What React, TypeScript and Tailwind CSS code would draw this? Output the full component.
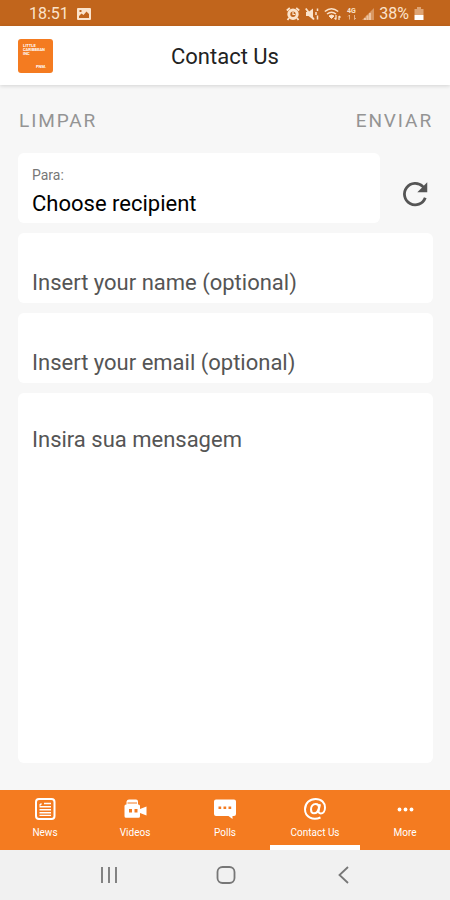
import React from "react";

const tabs = [
  { label: "News", icon: <NewsIcon /> },
  { label: "Videos", icon: <VideoIcon /> },
  { label: "Polls", icon: <PollsIcon /> },
  { label: "Contact Us", icon: <AtIcon />, active: true },
  { label: "More", icon: <MoreIcon /> },
];

function NewsIcon() {
  return (
    <svg viewBox="0 0 24 24" className="size-6" fill="none" stroke="currentColor" aria-hidden="true">
      <rect x="3" y="2" width="18.500" height="20" rx="3" strokeWidth="2" />
      <path d="M11 6.500h7M6.500 9.700h11.500M6.500 12.700h11.500M6.500 15.700h11.500M6.500 18.400h11.500" strokeWidth="1.400" />
      <path d="M6.500 8.500 8.500 6.500" strokeWidth="1.400" />
    </svg>
  );
}

function VideoIcon() {
  return (
    <svg viewBox="0 0 24 24" className="size-6" fill="currentColor" aria-hidden="true">
      <path
        fillRule="evenodd"
        d="M3.500 4.500Q4 2.500 6 2.500h7q2 0 2 2V7.500h.5q1.500 0 1.500 1.500v3l6.500-2.500v9L17 16v3.200q0 1.500-1.500 1.500H3Q1.500 20.700 1.500 19.200V9Q1.500 7.500 3 7.500h.5zM6 12v3.500h3V12zM11.500 12v3.500h3V12z"
      />
      <path d="M4.500 6h9.500" stroke="#f47b20" strokeWidth="1" />
    </svg>
  );
}

function PollsIcon() {
  return (
    <svg viewBox="0 0 24 24" className="size-6" fill="currentColor" aria-hidden="true">
      <path
        fillRule="evenodd"
        d="M3 2.500h18q2 0 2 2v12.500q0 2-2 2h-1.500V22l-4-3H3q-2 0-2-2v-12.500q0-2 2-2zM5.500 9.500v2.500h2.700V9.500zm5 0v2.500h2.700V9.500zm5 0v2.500h2.700V9.500z"
      />
    </svg>
  );
}

function AtIcon() {
  return (
    <svg viewBox="0 0 24 24" className="size-6" fill="none" stroke="currentColor" strokeWidth="2" aria-hidden="true">
      <path d="M17.500 20.500C10 24 2 20 2 12.300 2 6 6.800 2 12.600 2 18.600 2 22 6 22 10.500c0 3.500-1.800 6-4.200 6-2 0-2.500-1.400-2.100-3.300L17 7.300" />
      <path d="M16 10.500c0-2.200-1.300-3.500-3.300-3.500C9.800 7 8 9.700 8 12.600c0 2.200 1.200 3.700 3 3.700 2.700 0 4.400-2.300 5-5.800z" />
    </svg>
  );
}

function MoreIcon() {
  return (
    <svg viewBox="0 0 24 24" className="size-6" fill="currentColor" aria-hidden="true">
      <circle cx="6.500" cy="12.500" r="1.900" />
      <circle cx="12.500" cy="12.500" r="1.900" />
      <circle cx="18.500" cy="12.500" r="1.900" />
    </svg>
  );
}

function StatusBar() {
  return (
    <div className="flex h-[26px] items-center justify-between bg-[#c1651c] pt-0.5 pr-[26px] pl-[29px] text-[#fbe3cb]">
      <div className="flex items-center gap-2">
        <span className="text-base">18:51</span>
        <svg viewBox="0 0 14 12" className="h-3 w-3.5" fill="currentColor" aria-hidden="true">
          <path fillRule="evenodd" d="M1 0h12q1 0 1 1v10q0 1-1 1H1q-1 0-1-1V1q0-1 1-1zM2 8v2h10V6L9.500 3.500 6.500 7 4.500 5.500zM2.500 2v2h2V2z" />
        </svg>
      </div>
      <div className="flex items-center gap-[5px]">
        <svg viewBox="0 0 14 14" className="size-3.5" aria-hidden="true">
          <path d="M.8 3.500 3.800 1M13.200 3.500 10.200 1M3 11l-1.500 2M11 11l1.500 2" stroke="currentColor" strokeWidth="1.800" />
          <circle cx="7" cy="7.300" r="4.200" fill="none" stroke="currentColor" strokeWidth="3" />
          <path d="M7 4.800v2.700h2.200" fill="none" stroke="currentColor" strokeWidth="1.200" />
        </svg>
        <svg viewBox="0 0 14 14" className="size-3.5" aria-hidden="true">
          <path d="M1 5h2.500L8 1.500v11L3.500 9H1z" fill="currentColor" />
          <path d="M.8 1.500 9 12.500" stroke="currentColor" strokeWidth="1.800" />
          <path d="M12.500 1.500v2.500M11 5v3M12.500 8.500v4" stroke="currentColor" strokeWidth="1.500" />
        </svg>
        <svg viewBox="0 0 17 14" className="h-3.5 w-[17px]" fill="none" stroke="currentColor" aria-hidden="true">
          <path d="M.8 4.500q6.700-5.500 13.400 0M3 7q4.500-3.500 9 0" strokeWidth="1.500" />
          <path d="M5 9q2.500-2 5 0L7.500 11.500z" fill="currentColor" />
          <path d="M12 8v4.500M10.500 11l1.500 1.500M15 13V9M15 9l1.500 1.500" strokeWidth="1.300" />
        </svg>
        <svg viewBox="0 0 11 14" className="h-3.5 w-[11px]" fill="none" stroke="currentColor" aria-hidden="true">
          <text x="1" y="6" fontSize="7" fontWeight="700" fill="currentColor" stroke="none">4G</text>
          <path d="M3.500 12.500V8M2 9.500 3.500 8M8.500 8v4.500M8.500 12.500 10 11" opacity=".6" />
        </svg>
        <svg viewBox="0 0 12 12" className="size-3" fill="currentColor" aria-hidden="true">
          <path d="M12 0v12H0z" opacity=".4" />
          <path d="M2 10h2v2H2zM4.500 7.500h2V12h-2zM7 5h2v7H7z" opacity=".6" />
        </svg>
        <span className="text-base">38%</span>
        <svg viewBox="0 0 10 14" className="h-3.5 w-2.5" fill="currentColor" aria-hidden="true">
          <path d="M3 0h4v2H3zM.5 2h9v6h-9z" opacity=".5" />
          <path d="M.5 8h9v5h-9z" fill="#fff" />
        </svg>
      </div>
    </div>
  );
}

function Logo() {
  return (
    <svg viewBox="0 0 35 34" className="h-[34px] w-[35px]" role="img" aria-label="Logo">
      <rect width="35" height="34" rx="3" fill="#f47b20" />
      <g fill="#fff" fontSize="4" fontWeight="700">
        <text x="5" y="8">LITTLE</text>
        <text x="5" y="12">CARIBBEAN</text>
        <text x="5" y="16">INC</text>
        <text x="18" y="29">PNM.</text>
      </g>
    </svg>
  );
}

const field =
  "block w-full rounded-md bg-white px-3.5 text-[22px] text-[#555] outline-none placeholder:text-[#555] placeholder:opacity-100";

export default function App() {
  return (
    <div className="flex min-h-screen flex-col bg-[#f7f7f7] font-['Roboto',sans-serif]">
      <StatusBar />
      <header className="grid h-[59px] grid-cols-[1fr_auto_1fr] items-center bg-white px-[18px] shadow-[0_1px_4px_rgba(0,0,0,0.15)]">
        <Logo />
        <h1 className="pt-0.5 text-[22px] text-[#222]">Contact Us</h1>
      </header>

      <form className="flex flex-1 flex-col pr-[17px] pb-[27px] pl-[18px]" onSubmit={(e) => e.preventDefault()}>
        <div className="flex h-[68px] items-center justify-between pt-1 pl-px text-[19px] tracking-widest text-[#949494]">
          <button type="reset">LIMPAR</button>
          <button type="submit">ENVIAR</button>
        </div>

        <div className="flex flex-1 flex-col gap-2.5">
          <div className="flex items-center">
            <div className="flex h-[70px] flex-1 flex-col rounded-md bg-white px-3.5 pt-3">
              <label htmlFor="recipient" className="text-sm leading-5 text-[#777]">Para:</label>
              <select id="recipient" className="mt-0.5 h-8 w-full appearance-none bg-transparent text-[22px] text-black outline-none">
                <option>Choose recipient</option>
              </select>
            </div>
            <button type="button" aria-label="Refresh" className="flex w-[53px] justify-end pt-3 pr-1 text-[#555]">
              <svg viewBox="0 0 24 24" className="size-7" fill="none" aria-hidden="true">
                <path d="M20.800 15.200a9.200 9.200 0 1 1-2-9.500L21 8" stroke="currentColor" strokeWidth="2.400" />
                <path d="M22.500 2v8.500H14z" fill="currentColor" />
              </svg>
            </button>
          </div>
          <input type="text" aria-label="Name" placeholder="Insert your name (optional)" className={`h-[70px] pt-7 ${field}`} />
          <input type="email" aria-label="Email" placeholder="Insert your email (optional)" className={`h-[70px] pt-7 ${field}`} />
          <textarea
            aria-label="Message"
            placeholder="Insira sua mensagem"
            className={`flex-1 resize-none pt-[30px] ${field}`}
          />
        </div>
      </form>

      <nav className="grid h-[60px] grid-cols-5 bg-[#f47b20] text-white">
        {tabs.map((t) => (
          <a
            key={t.label}
            href="#"
            aria-current={t.active ? "page" : undefined}
            className={`flex flex-col items-center gap-1.5 border-b-[5px] pt-[7px] ${t.active ? "border-white" : "border-transparent"}`}
          >
            {t.icon}
            <span className="text-[10px] leading-3">{t.label}</span>
          </a>
        ))}
      </nav>

      <div className="flex h-[50px] items-center justify-between bg-[#f1f1f1] pr-[97px] pl-[99px] text-[#777]">
        <button type="button" aria-label="Recent apps">
          <svg viewBox="0 0 20 20" className="size-5" stroke="currentColor" strokeWidth="1.800" aria-hidden="true">
            <path d="M3 2v16M10 2v16M17 2v16" />
          </svg>
        </button>
        <button type="button" aria-label="Home">
          <svg viewBox="0 0 20 20" className="size-5" fill="none" stroke="currentColor" strokeWidth="1.800" aria-hidden="true">
            <rect x="1.500" y="2" width="17" height="16" rx="5" />
          </svg>
        </button>
        <button type="button" aria-label="Back">
          <svg viewBox="0 0 20 20" className="size-5" fill="none" stroke="currentColor" strokeWidth="1.800" aria-hidden="true">
            <path d="M15 2 6.500 10l8.500 8" />
          </svg>
        </button>
      </div>
    </div>
  );
}
